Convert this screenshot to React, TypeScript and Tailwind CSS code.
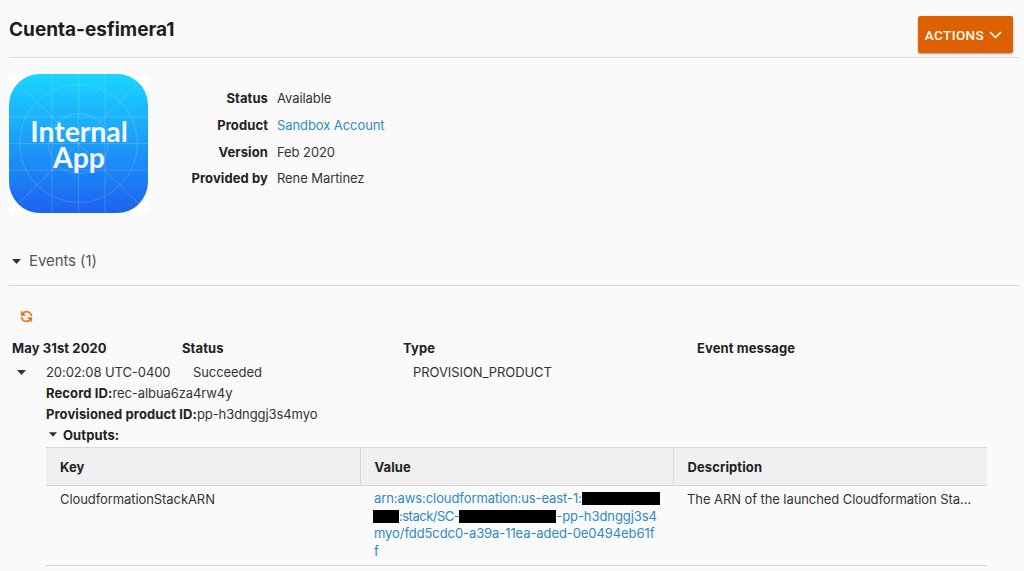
import React from "react";

function Caret({ className = "" }: { className?: string }) {
  return (
    <svg width="9" height="5" viewBox="0 0 9 5" className={className}>
      <path d="M0 0H9L4.5 5Z" fill="#333" />
    </svg>
  );
}

function Bar({ w }: { w: string }) {
  return <span className={`inline-block h-[13px] align-[-2px] bg-black ${w}`} />;
}

function AppIcon() {
  const line = "rgba(255,255,255,0.16)";
  return (
    <div className="w-[139px] h-[140px] bg-white shrink-0">
      <svg width="139" height="140" viewBox="0 0 139 140" className="block">
        <defs>
          <linearGradient id="g" x1="0" y1="0" x2="0" y2="1">
            <stop offset="0" stopColor="#1ad6ff" />
            <stop offset="1" stopColor="#1d62f0" />
          </linearGradient>
          <clipPath id="c"><rect x="0" y="0" width="139" height="139" rx="31" /></clipPath>
        </defs>
        <rect x="0" y="0" width="139" height="139" rx="31" fill="url(#g)" />
        <g clipPath="url(#c)" stroke={line} strokeWidth="1" fill="none">
          <path d="M43 0V139M69.5 0V139M96 0V139M0 43H139M0 69.5H139M0 96H139M0 0L139 139M139 0L0 139" />
          <circle cx="69.5" cy="69.5" r="59" />
          <circle cx="69.5" cy="69.5" r="30" />
        </g>
        <text textAnchor="middle" fill="#f4fbff" fontSize="28.5" fontWeight="700" fontFamily="Lato, sans-serif">
          <tspan x="70" y="68">Internal</tspan>
          <tspan x="70" y="94">App</tspan>
        </text>
      </svg>
    </div>
  );
}

function Info({ label, children }: { label: string; children: React.ReactNode }) {
  return (
    <div className="flex h-[26.67px] items-center">
      <div className="w-[86px] text-right font-bold tracking-[0.1px] text-[#222] whitespace-nowrap">{label}</div>
      <div className="ml-[9px] text-[#333]">{children}</div>
    </div>
  );
}

export default function App() {
  return (
    <div className="w-[1024px] h-[571px] overflow-hidden bg-[#fafafa] text-[13px] leading-[20px] text-[#333] font-['Inter',sans-serif] tracking-[-0.08px]">
      <header className="ml-[9px] mr-[4px] h-[58px] border-b border-[#dcdcdc] flex justify-between pt-[16px]">
        <h1 className="mt-[1px] text-[19px] leading-[26px] font-bold tracking-normal text-[#1e1e1e]">Cuenta-esfimera1</h1>
        <button className="mr-[7px] w-[95px] h-[37px] pr-[4px] bg-[#dd6100] rounded-[2px] shadow-[0_1px_2px_rgba(0,0,0,0.35)] text-white text-[13.5px] tracking-[0.4px] font-medium font-['Roboto',sans-serif] flex items-center justify-center gap-[5px]">
          ACTIONS
          <svg width="13" height="8" viewBox="0 0 13 8" fill="none" stroke="white" strokeWidth="1.5">
            <path d="M1 1L6.5 6.5L12 1" />
          </svg>
        </button>
      </header>

      <section className="flex ml-[9px] mt-[16px] h-[140px]">
        <AppIcon />
        <div className="ml-[34px] pt-[11px]">
          <Info label="Status">Available</Info>
          <Info label="Product"><span className="text-[#2f8ac5]">Sandbox Account</span></Info>
          <Info label="Version">Feb 2020</Info>
          <Info label="Provided by">Rene Martinez</Info>
        </div>
      </section>

      <section className="ml-[9px] mr-[4px] mt-[32px] h-[40px] border-b border-[#d8d8d8] flex items-start">
        <div className="flex items-center gap-[8px] pl-[3px] h-[30px] text-[15px] text-[#555]">
          <Caret />
          Events (1)
        </div>
      </section>

      <div className="ml-[20px] mt-[24px] h-[14px]">
        <svg width="13" height="13" viewBox="0 0 24 24" fill="none" stroke="#ec7211" strokeWidth="3" strokeLinecap="round" strokeLinejoin="round" className="block">
          <path d="M21 10A9.2 9.2 0 0 0 4.5 7" />
          <path d="M3 3.5V9H8.5" />
          <path d="M3 14A9.2 9.2 0 0 0 19.5 17" />
          <path d="M21 20.5V15H15.5" />
        </svg>
      </div>

      <div className="ml-[12px] mt-[14px] flex font-bold tracking-[0.1px] text-[#222] h-[20px] items-center">
        <div className="w-[170px]">May 31st 2020</div>
        <div className="w-[221px]">Status</div>
        <div className="w-[294px]">Type</div>
        <div>Event message</div>
      </div>

      <div className="flex mt-[4px] h-[20px] items-center">
        <Caret className="ml-[17px] w-[9px]" />
        <div className="ml-[20px] w-[147px] whitespace-nowrap">20:02:08 UTC-0400</div>
        <div className="w-[220px]">Succeeded</div>
        <div>PROVISION_PRODUCT</div>
      </div>

      <div className="ml-[46px]">
        <div className="h-[21px] flex items-center"><b className="font-bold tracking-[0.1px] text-[#222]">Record ID:</b>rec-albua6za4rw4y</div>
        <div className="h-[21px] flex items-center"><b className="font-bold tracking-[0.1px] text-[#222]">Provisioned product ID:</b>pp-h3dnggj3s4myo</div>
        <div className="h-[21px] flex items-center gap-[6px] font-bold tracking-[0.1px] text-[#222] pl-[3px]">
          <Caret className="w-[8px]" />
          Outputs:
        </div>
        <table className="mt-[2px] w-[941px] table-fixed border-collapse">
          <thead>
            <tr className="h-[38px] bg-[#f0f0f0] border-y border-[#d8d8d8] text-left text-[#222] tracking-[0.1px]">
              <th className="w-[314px] pl-[14px] font-bold">Key</th>
              <th className="w-[313px] pl-[14px] font-bold border-l border-[#d8d8d8]">Value</th>
              <th className="pl-[14px] font-bold border-l border-[#d8d8d8]">Description</th>
            </tr>
          </thead>
          <tbody>
            <tr className="h-[80px] border-b border-[#d8d8d8] align-top">
              <td className="pl-[14px] pt-[3px]">CloudformationStackARN</td>
              <td className="pl-[14px] pt-[4px] text-[#2f8ac5] leading-[17.5px] whitespace-nowrap">
                <div>arn:aws:cloudformation:us-east-1:<Bar w="w-[78px]" /></div>
                <div className="-ml-[1px]"><Bar w="w-[26px]" /><span className="tracking-[-0.5px]">:stack/SC-</span><Bar w="w-[97px]" />-pp-h3dnggj3s4</div>
                <div>myo/fdd5cdc0-a39a-11ea-aded-0e0494eb61f</div>
                <div>f</div>
              </td>
              <td className="pl-[14px] pr-[14px] pt-[3px] whitespace-nowrap overflow-hidden text-ellipsis">The ARN of the launched Cloudformation Stack</td>
            </tr>
          </tbody>
        </table>
      </div>
    </div>
  );
}
